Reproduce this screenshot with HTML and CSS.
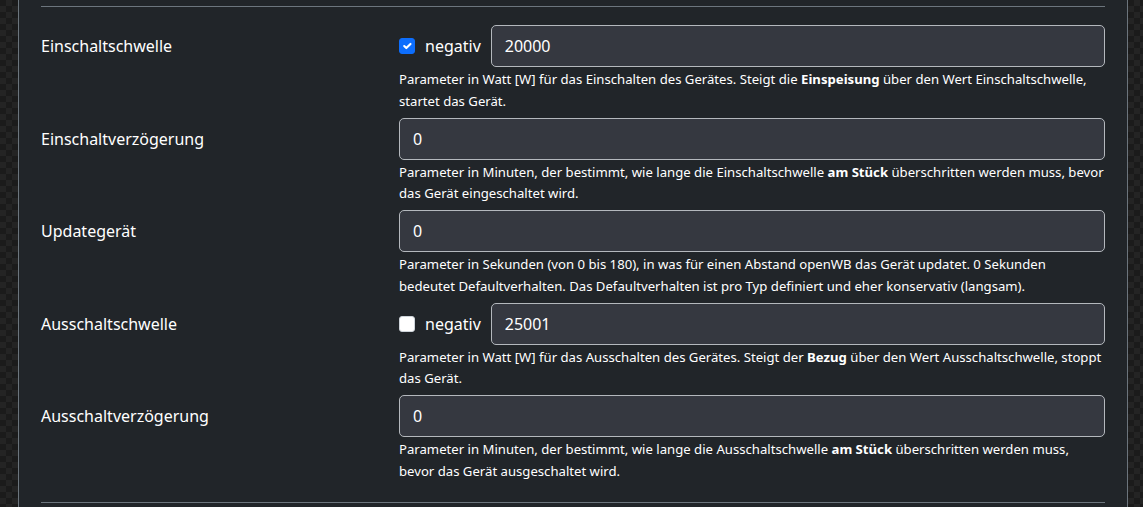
FILE: index.html
```
<!DOCTYPE html>
<html>
<head>
    <meta charset="utf-8" />
    <title>Gerät Einstellungen</title>
    <link rel="stylesheet" href="styles.css">
</head>
<body>
    <div class="card">
        <hr class="divider" />

        <div class="setting-row">
            <label class="setting-label">Einschaltschwelle</label>
            <div class="setting-control">
                <div class="input-line">
                    <label class="check-label">
                        <input type="checkbox" class="check" checked />
                        <span>negativ</span>
                    </label>
                    <input type="text" class="text-input" value="20000" />
                </div>
                <p class="help-text">Parameter in Watt [W] für das Einschalten des Gerätes. Steigt die <b>Einspeisung</b> über den Wert Einschaltschwelle, startet das Gerät.</p>
            </div>
        </div>

        <div class="setting-row">
            <label class="setting-label">Einschaltverzögerung</label>
            <div class="setting-control">
                <input type="text" class="text-input" value="0" />
                <p class="help-text">Parameter in Minuten, der bestimmt, wie lange die Einschaltschwelle <b>am Stück</b> überschritten werden muss, bevor das Gerät eingeschaltet wird.</p>
            </div>
        </div>

        <div class="setting-row">
            <label class="setting-label">Updategerät</label>
            <div class="setting-control">
                <input type="text" class="text-input" value="0" />
                <p class="help-text">Parameter in Sekunden (von 0 bis 180), in was für einen Abstand openWB das Gerät updatet. 0 Sekunden bedeutet Defaultverhalten. Das Defaultverhalten ist pro Typ definiert und eher konservativ (langsam).</p>
            </div>
        </div>

        <div class="setting-row">
            <label class="setting-label">Ausschaltschwelle</label>
            <div class="setting-control">
                <div class="input-line">
                    <label class="check-label">
                        <input type="checkbox" class="check" />
                        <span>negativ</span>
                    </label>
                    <input type="text" class="text-input" value="25001" />
                </div>
                <p class="help-text">Parameter in Watt [W] für das Ausschalten des Gerätes. Steigt der <b>Bezug</b> über den Wert Ausschaltschwelle, stoppt das Gerät.</p>
            </div>
        </div>

        <div class="setting-row">
            <label class="setting-label">Ausschaltverzögerung</label>
            <div class="setting-control">
                <input type="text" class="text-input" value="0" />
                <p class="help-text">Parameter in Minuten, der bestimmt, wie lange die Ausschaltschwelle <b>am Stück</b> überschritten werden muss, bevor das Gerät ausgeschaltet wird.</p>
            </div>
        </div>

        <hr class="divider bottom" />
    </div>
</body>
</html>
```

FILE: styles.css
```
body {
    margin: 0;
    height: 507px;
    overflow: hidden;
    background-color: #1b1b1b;
    background-image:
        linear-gradient(45deg, #242424 25%, transparent 25%, transparent 75%, #242424 75%),
        linear-gradient(45deg, #242424 25%, transparent 25%, transparent 75%, #242424 75%);
    background-size: 12px 12px;
    background-position: 0 0, 6px 6px;
    font-family: "Noto Sans", "Open Sans", Arial, sans-serif;
    color: #fff;
}

.card {
    margin-left: 18px;
    width: 1110px;
    height: 507px;
    box-sizing: border-box;
    background-color: #212529;
    border-left: 1px solid #6c757d;
    border-right: 1px solid #6c757d;
    padding: 6px 22px 0 22px;
}

.divider {
    margin: 0;
    border: none;
    border-top: 1px solid #6c757d;
}

.divider.bottom {
    margin-top: 20px;
}

.setting-row {
    display: grid;
    grid-template-columns: 358px 1fr;
    margin-top: 18px;
}

.setting-row + .setting-row {
    margin-top: 5.5px;
}

.setting-label {
    font-size: 16px;
    line-height: 42px;
}

.input-line {
    display: flex;
    align-items: center;
}

.check-label {
    display: flex;
    align-items: center;
    font-size: 16px;
    margin-right: 10px;
}

.check {
    appearance: none;
    width: 16px;
    height: 16px;
    margin: 0 10px 0 0;
    border-radius: 3px;
    border: 1px solid #ced4da;
    background-color: #fff;
}

.check:checked {
    border-color: #0d6efd;
    background-color: #0d6efd;
    background-image: url("data:image/svg+xml,%3csvg xmlns='http://www.w3.org/2000/svg' viewBox='0 0 20 20'%3e%3cpath fill='none' stroke='%23fff' stroke-linecap='round' stroke-linejoin='round' stroke-width='3' d='M6 10l3 3l6-6'/%3e%3c/svg%3e");
    background-size: 100% 100%;
}

.text-input {
    display: block;
    width: 100%;
    flex: 1;
    height: 42px;
    box-sizing: border-box;
    padding: 0 13px;
    font-family: inherit;
    font-size: 16px;
    color: #fff;
    background-color: #353840;
    border: 1px solid #b4b8bd;
    border-radius: 5px;
}

.help-text {
    margin: 2px 0 0 0;
    font-size: 13.15px;
    line-height: 21.5px;
}

.help-text b {
    font-weight: 700;
}
```
